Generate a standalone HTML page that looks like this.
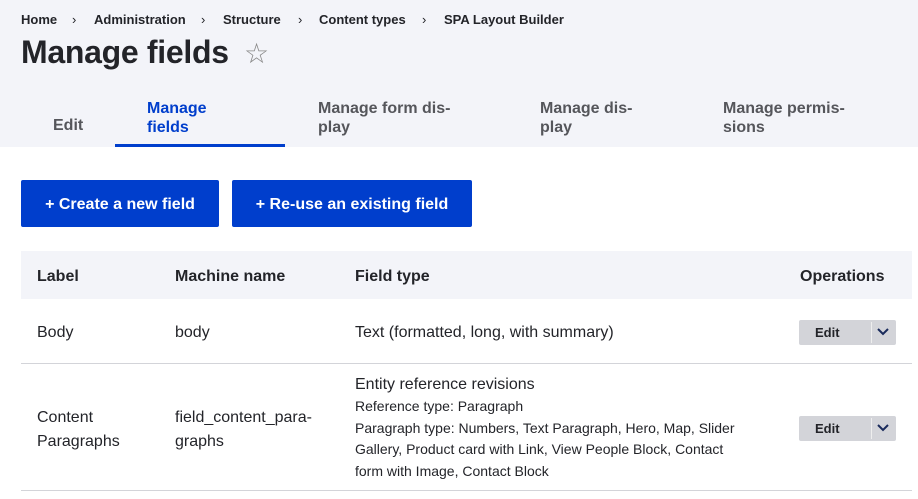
<!DOCTYPE html>
<html><head><meta charset="utf-8"><style>
*{margin:0;padding:0;box-sizing:border-box}
body{width:918px;height:499px;overflow:hidden;background:#fff;font-family:"Liberation Sans",sans-serif;color:#232429;position:relative}
.a{position:absolute;white-space:nowrap}
.hdr{position:absolute;left:0;top:0;width:918px;height:147px;background:#f3f4f9}
.bc{font-size:13px;font-weight:bold;top:12px}
.tab{font-size:16px;font-weight:bold;color:#55565b;line-height:19px}
.btn{position:absolute;top:180px;height:47px;background:#003ecc;color:#fff;font-weight:bold;font-size:16px;line-height:49px;text-align:center;border-radius:2px}
.th{font-size:16px;font-weight:bold;top:268px}
.td{font-size:16px}
.sm{font-size:14px;line-height:21.7px}
.eb{position:absolute;left:799px;width:97px;height:25px;background:#d3d4d9;border-radius:2px;font-size:13px;font-weight:bold}
.eb span{position:absolute;left:16px;top:5px}
.eb i{position:absolute;left:72px;top:2px;width:1px;height:21px;background:#eee}
.eb svg{position:absolute;left:78px;top:8px}
</style></head><body>
<div class="hdr"></div>
<div class="a bc" style="left:21px">Home</div>
<div class="a bc" style="left:72px;font-weight:normal">›</div>
<div class="a bc" style="left:94px">Administration</div>
<div class="a bc" style="left:201px;font-weight:normal">›</div>
<div class="a bc" style="left:223px">Structure</div>
<div class="a bc" style="left:298px;font-weight:normal">›</div>
<div class="a bc" style="left:319px">Content types</div>
<div class="a bc" style="left:422px;font-weight:normal">›</div>
<div class="a bc" style="left:444px">SPA Layout Builder</div>
<div class="a" style="left:21px;top:34px;font-size:32px;font-weight:bold;letter-spacing:-0.3px">Manage fields</div>
<div class="a" style="left:244px;top:37px;font-size:28px;color:#888">☆</div>
<div class="a tab" style="left:53px;top:116px">Edit</div>
<div class="a tab" style="left:147px;top:99px;color:#003ecc">Manage<br>fields</div>
<div class="a" style="left:115px;top:144px;width:170px;height:3px;background:#003ecc"></div>
<div class="a tab" style="left:318px;top:99px">Manage form dis-<br>play</div>
<div class="a tab" style="left:540px;top:99px">Manage dis-<br>play</div>
<div class="a tab" style="left:723px;top:99px">Manage permis-<br>sions</div>
<div class="btn" style="left:21px;width:198px">+ Create a new field</div>
<div class="btn" style="left:232px;width:240px">+ Re-use an existing field</div>
<div class="a" style="left:21px;top:251px;width:891px;height:48px;background:#f3f4f9"></div>
<div class="a th" style="left:37px">Label</div>
<div class="a th" style="left:175px">Machine name</div>
<div class="a th" style="left:355px">Field type</div>
<div class="a th" style="left:800px">Operations</div>
<div class="a td" style="left:37px;top:324px">Body</div>
<div class="a td" style="left:175px;top:324px">body</div>
<div class="a td" style="left:355px;top:324px">Text (formatted, long, with summary)</div>
<div class="eb" style="top:320px"><span>Edit</span><i></i><svg width="12" height="8" viewBox="0 0 12 8"><path d="M1 1l5 5 5-5" stroke="#1a2b5c" stroke-width="2" fill="none"/></svg></div>
<div class="a" style="left:21px;top:363px;width:891px;height:1px;background:#d3d4d9"></div>
<div class="a td" style="left:37px;top:406px;line-height:24px">Content<br>Paragraphs</div>
<div class="a td" style="left:175px;top:406px;line-height:24px">field_content_para-<br>graphs</div>
<div class="a td" style="left:355px;top:376px">Entity reference revisions</div>
<div class="a sm" style="left:355px;top:396px">Reference type: Paragraph<br>Paragraph type: Numbers, Text Paragraph, Hero, Map, Slider<br>Gallery, Product card with Link, View People Block, Contact<br>form with Image, Contact Block</div>
<div class="eb" style="top:416px"><span>Edit</span><i></i><svg width="12" height="8" viewBox="0 0 12 8"><path d="M1 1l5 5 5-5" stroke="#1a2b5c" stroke-width="2" fill="none"/></svg></div>
<div class="a" style="left:21px;top:490px;width:891px;height:1px;background:#d3d4d9"></div>
</body></html>
